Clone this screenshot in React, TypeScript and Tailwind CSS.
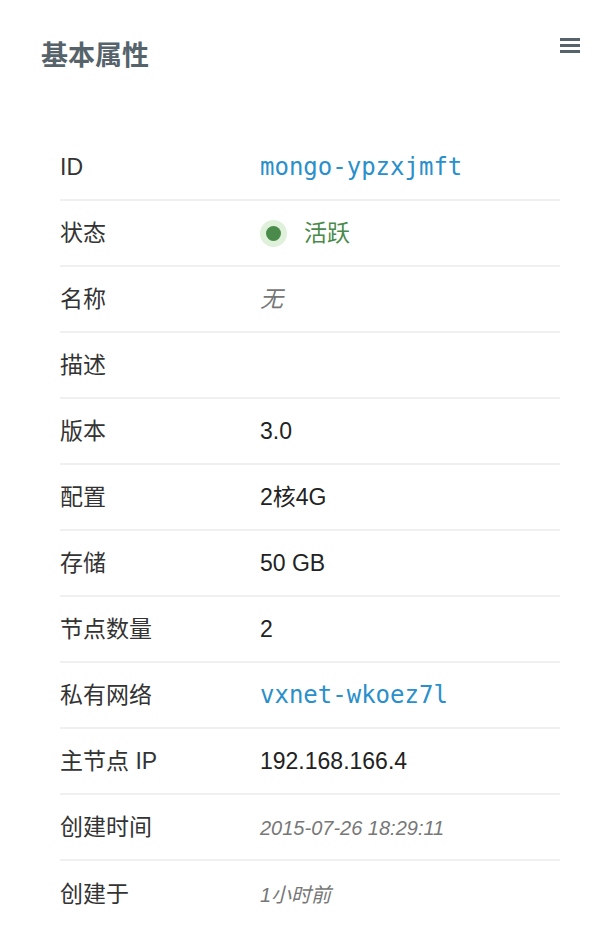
import React from 'react'

const sans = '"Liberation Sans", "Noto Sans CJK SC", sans-serif'
const mono = '"DejaVu Sans Mono", "Noto Sans CJK SC", monospace'

type Row = { label: string; value: React.ReactNode }

const rows: Row[] = [
  { label: 'ID', value: <span className="text-[#2a8fcb] text-[24px]" style={{ fontFamily: mono }}>mongo-ypzxjmft</span> },
  {
    label: '状态',
    value: (
      <span className="flex items-center gap-[17px] text-[#4a8a4a]">
        <span className="w-[27px] h-[27px] rounded-full bg-[#dff0db] flex items-center justify-center">
          <span className="w-[15px] h-[15px] rounded-full bg-[#4a8a4a]" />
        </span>
        活跃
      </span>
    ),
  },
  { label: '名称', value: <span className="italic text-[#777]">无</span> },
  { label: '描述', value: null },
  { label: '版本', value: '3.0' },
  { label: '配置', value: '2核4G' },
  { label: '存储', value: '50 GB' },
  { label: '节点数量', value: '2' },
  { label: '私有网络', value: <span className="text-[#2a8fcb] text-[24px]" style={{ fontFamily: mono }}>vxnet-wkoez7l</span> },
  { label: '主节点 IP', value: '192.168.166.4' },
  { label: '创建时间', value: <span className="italic text-[#777] text-[20px]">2015-07-26 18:29:11</span> },
  { label: '创建于', value: <span className="italic text-[#777] text-[20px]">1小时前</span> },
]

export default function App() {
  return (
    <div className="w-full min-h-screen bg-white" style={{ fontFamily: sans }}>
      {/* 标题栏 */}
      <div className="flex justify-between pl-[41px] pr-[20px] pt-[39px]">
        <h2 className="text-[27px] leading-[34px] font-bold text-[#56636b]">基本属性</h2>
        <svg width="20" height="16" viewBox="0 0 20 16" className="-mt-[1px]">
          <rect x="0" y="0" width="20" height="3" fill="#56636b" />
          <rect x="0" y="6" width="20" height="3" fill="#56636b" />
          <rect x="0" y="12" width="20" height="3" fill="#56636b" />
        </svg>
      </div>

      {/* 属性列表 */}
      <div className="pl-[60px] pr-[40px] pt-[62px]">
        {rows.map((r, i) => (
          <div
            key={r.label}
            className={`flex items-center h-[66px] ${i < rows.length - 1 ? 'border-b-2 border-[#f0f0f0]' : ''}`}
          >
            <div className="w-[200px] text-[23px] text-[#333]">{r.label}</div>
            <div className="flex-1 text-[23px] text-[#222]">{r.value}</div>
          </div>
        ))}
      </div>
    </div>
  )
}
